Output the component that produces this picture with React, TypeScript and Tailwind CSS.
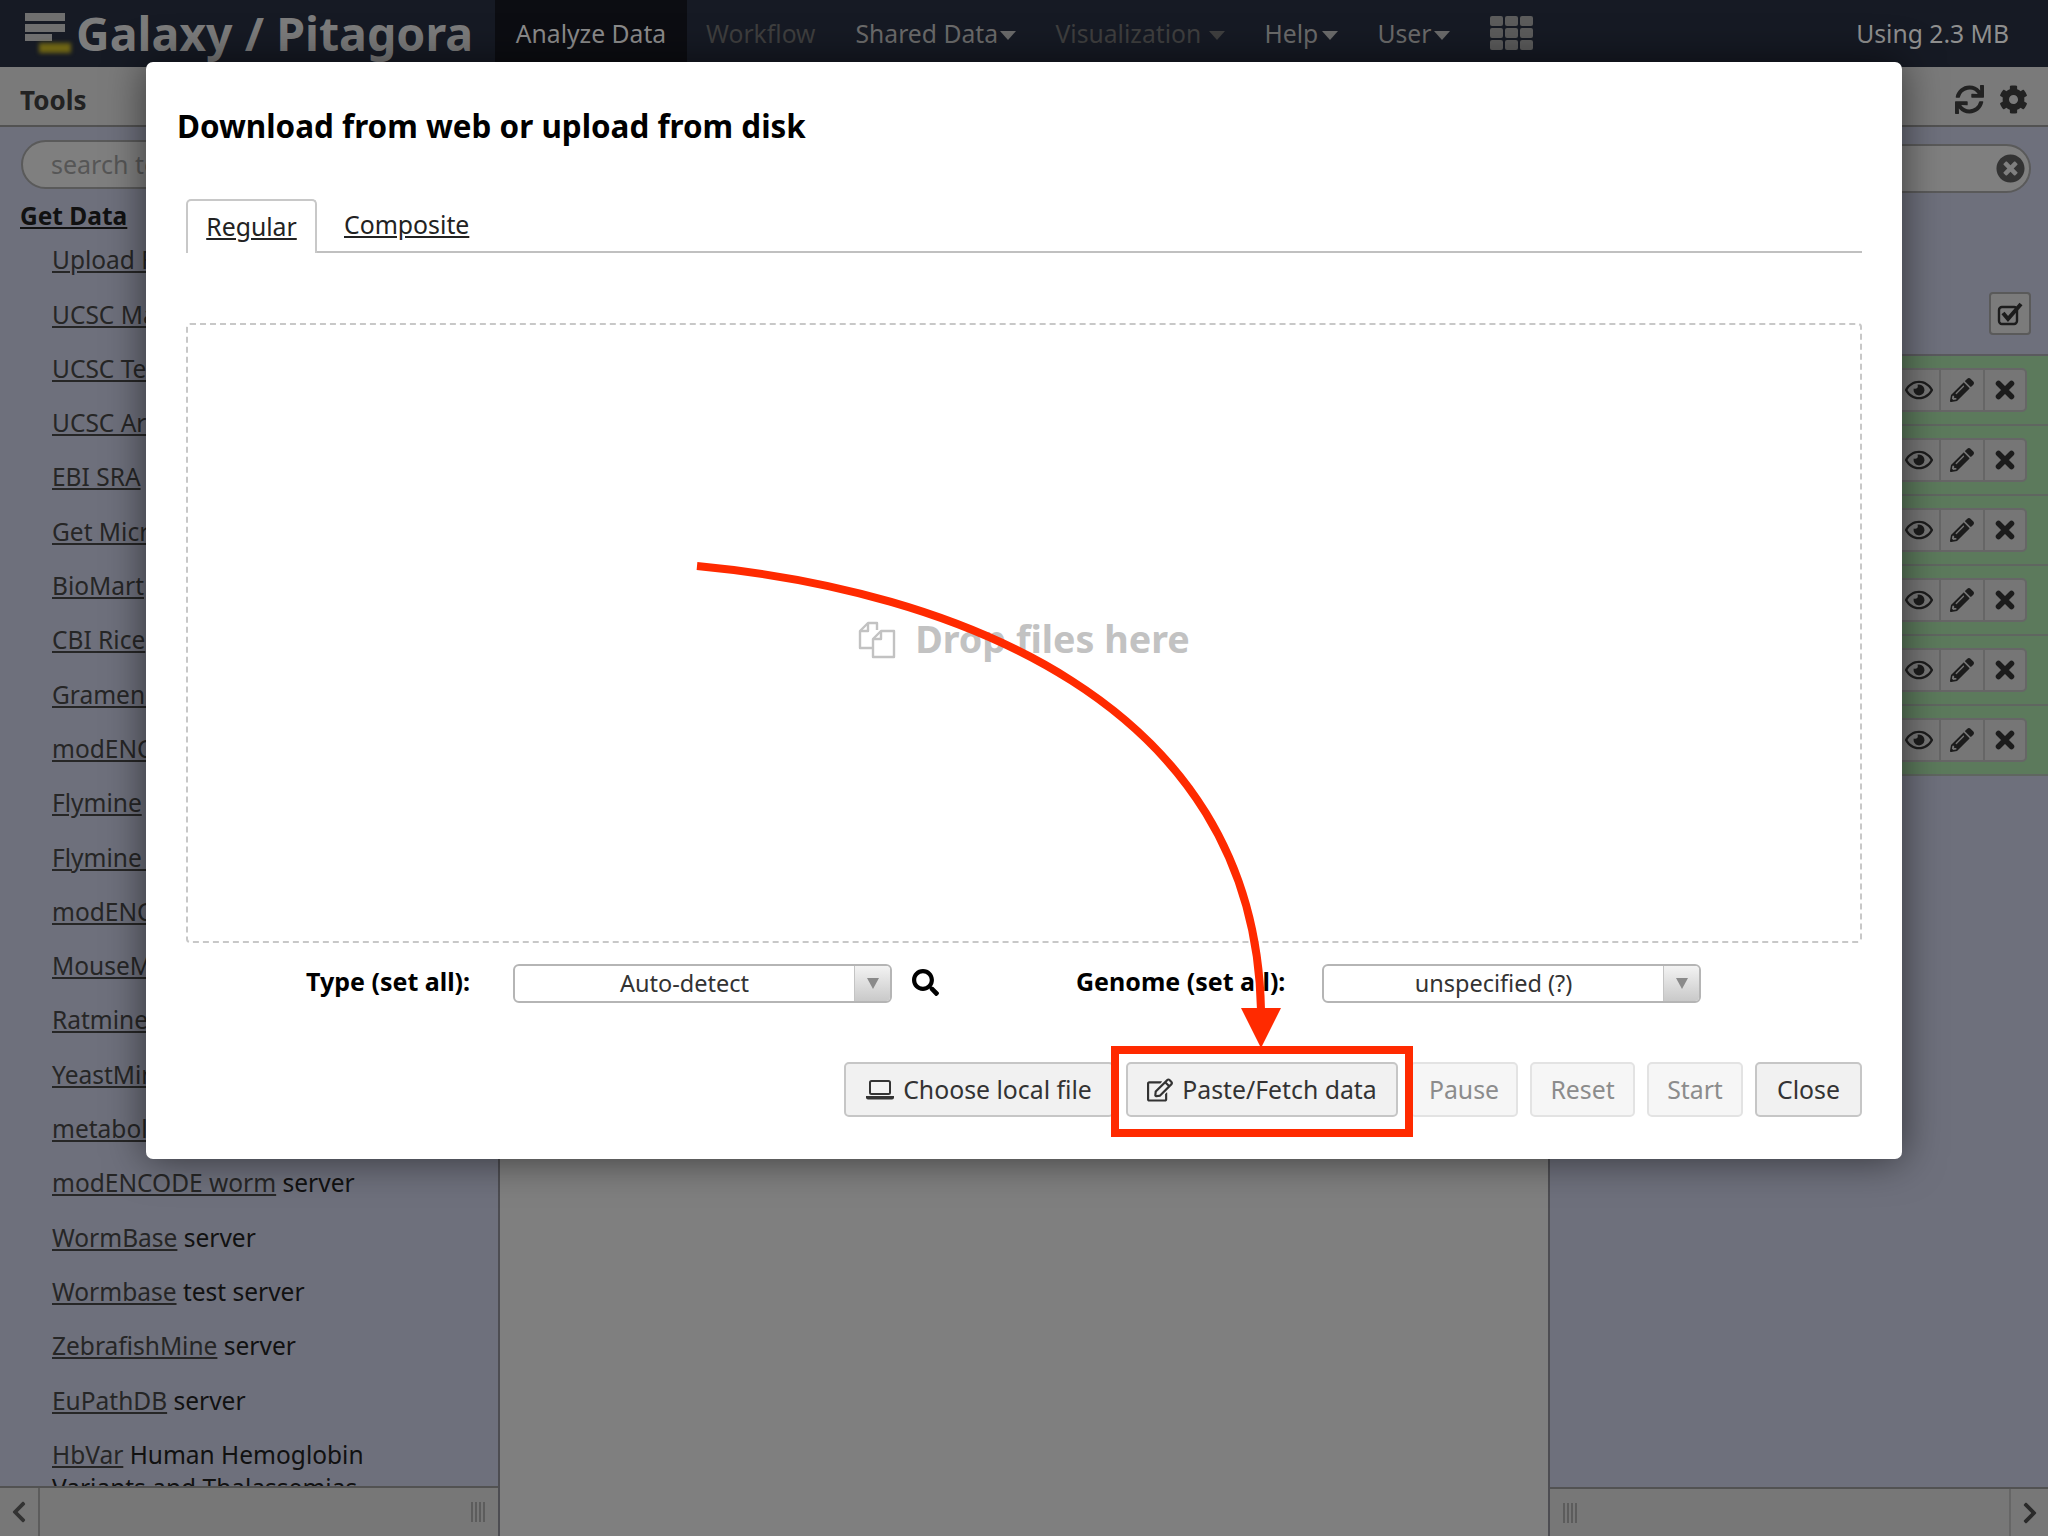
import {
  FaChevronLeft,
  FaChevronRight,
  FaCog,
  FaPencilAlt,
  FaRegEdit,
  FaRegEye,
  FaSearch,
  FaSync,
  FaTimesCircle,
} from "react-icons/fa";

const tools: Array<{ link: string; rest?: string }> = [
  { link: "Upload File", rest: "from your computer" },
  { link: "UCSC Main", rest: "table browser" },
  { link: "UCSC Test", rest: "table browser" },
  { link: "UCSC Archaea", rest: "table browser" },
  { link: "EBI SRA", rest: "ENA SRA" },
  { link: "Get Microbial", rest: "Data" },
  { link: "BioMart", rest: "Ensembl server" },
  { link: "CBI Rice", rest: "Mart" },
  { link: "GrameneMart", rest: "" },
  { link: "modENCODE fly", rest: "server" },
  { link: "Flymine", rest: "server" },
  { link: "Flymine test", rest: "server" },
  { link: "modENCODE modMine", rest: "" },
  { link: "MouseMine", rest: "server" },
  { link: "Ratmine", rest: "server" },
  { link: "YeastMine", rest: "server" },
  { link: "metabolicMine", rest: "server" },
  { link: "modENCODE worm", rest: "server" },
  { link: "WormBase", rest: "server" },
  { link: "Wormbase", rest: "test server" },
  { link: "ZebrafishMine", rest: "server" },
  { link: "EuPathDB", rest: "server" },
];

function NavItem({ label, caret, dim, width }: { label: string; caret?: boolean; dim?: boolean; width?: string }) {
  return (
    <span className={`flex items-center justify-between whitespace-nowrap ${width ?? ""} ${dim ? "text-[#3f3f3f]" : "text-[#6b6b6b]"}`}>
      {label}
      {caret && (
        <span className="mt-[4px] h-0 w-0 shrink-0 border-x-[8px] border-t-[9px] border-x-transparent border-t-current" />
      )}
    </span>
  );
}

function HistoryRow() {
  return (
    <div className="flex h-[70px] items-center justify-end border-b-2 border-[#5f6660] pr-[21px]">
      <div className="flex h-[44px] rounded-[5px] border-2 border-[#666] bg-[#767676] text-[#1c1c1c]">
        <span className="grid w-[42px] place-items-center border-r-2 border-[#666] text-[28px]">
          <FaRegEye />
        </span>
        <span className="grid w-[44px] place-items-center border-r-2 border-[#666] text-[24px]">
          <FaPencilAlt />
        </span>
        <span className="grid w-[40px] place-items-center">
          <svg width="20" height="20" viewBox="0 0 20 20" stroke="#1c1c1c" strokeWidth="5.5" strokeLinecap="round">
            <path d="M3.5 3.5 L16.5 16.5 M16.5 3.5 L3.5 16.5" />
          </svg>
        </span>
      </div>
    </div>
  );
}

function Grip() {
  return (
    <span className="flex h-[20px] gap-[2px]">
      <span className="w-[2px] bg-[#5c5c5c]" />
      <span className="w-[2px] bg-[#5c5c5c]" />
      <span className="w-[2px] bg-[#5c5c5c]" />
      <span className="w-[2px] bg-[#5c5c5c]" />
    </span>
  );
}

function SelectBox({ value, width }: { value: string; width: string }) {
  return (
    <div className={`flex h-[39px] ${width} overflow-hidden rounded-[6px] border-2 border-[#b5b5b5] bg-white`}>
      <span className="flex-1 text-center text-[23.5px] font-normal leading-[35px] text-[#333]">{value}</span>
      <span className="flex w-[36px] items-center justify-center border-l border-[#c4c4c4] bg-gradient-to-b from-[#f3f3f3] to-[#c9c9c9]">
        <span className="h-0 w-0 border-x-[6px] border-t-[11px] border-x-transparent border-t-[#8a8a8a]" />
      </span>
    </div>
  );
}

function FooterButton({ label, width, disabled, children }: { label: string; width: string; disabled?: boolean; children?: React.ReactNode }) {
  return (
    <button
      className={`flex h-[55px] ${width} items-center justify-center gap-[9px] rounded-[5px] border-2 text-[24.8px] ${
        disabled ? "border-[#e3e3e3] bg-[#f6f6f6] text-[#8c8c8c]" : "border-[#c6c6c6] bg-[#f1f1f1] text-[#333]"
      }`}
    >
      {children}
      {label}
    </button>
  );
}

export default function App() {
  return (
    <div className="relative h-[1536px] w-[2048px] overflow-hidden bg-[#7f7f7f] font-['Noto_Sans','DejaVu_Sans',sans-serif]">
      <nav className="flex h-[67px] items-center bg-[#161a24] text-[24.7px]">
        <div className="relative ml-[25px] h-[41px] w-[41px]">
          <span className="absolute left-0 top-0 h-[8px] w-[40px] bg-[#6f6f6f]" />
          <span className="absolute left-0 top-[11px] h-[8px] w-[40px] bg-[#6f6f6f]" />
          <span className="absolute left-0 top-[21px] h-[7px] w-[27px] bg-[#6f6f6f]" />
          <span className="absolute left-[14px] top-[30px] h-[10px] w-[32px] bg-[#6e6414] blur-[2px]" />
        </div>
        <span className="ml-[10px] w-[419px] whitespace-nowrap text-[46.5px] font-bold text-[#7c7c7c]">Galaxy / Pitagora</span>
        <span className="flex h-full w-[192px] items-center justify-center bg-[#0c0d12] text-[#8c8c8c]">Analyze Data</span>
        <div className="ml-[19px] flex items-center gap-[40px]">
          <NavItem label="Workflow" dim />
          <NavItem label="Shared Data" caret width="w-[160px]" />
          <NavItem label="Visualization" caret dim width="w-[169px]" />
          <NavItem label="Help" caret width="w-[73px]" />
          <NavItem label="User" caret width="w-[72px]" />
          <div className="grid grid-cols-3 gap-[2px]">
            {[0, 1, 2, 3, 4, 5, 6, 7, 8].map((i) => (
              <span key={i} className="h-[10px] w-[13px] rounded-[2px] bg-[#5c5c5c]" />
            ))}
          </div>
        </div>
        <span className="ml-auto mr-[39px] text-[#8f8f8f]">Using 2.3 MB</span>
      </nav>

      <div className="flex h-[1469px]">
        <aside className="w-[500px] shrink-0 overflow-hidden border-r-2 border-[#4d4d52] bg-[#6e707c]">
          <div className="flex h-[60px] items-center border-b-2 border-[#525252] bg-[#7a7a7a] pl-[20px] pt-[8px] text-[26px] font-bold text-[#222]">
            Tools
          </div>
          <div className="mx-[21px] mt-[13px] flex h-[49px] items-center rounded-full border-2 border-[#5a5a5a] bg-[#7f7f7f] pl-[28px] text-[25px] text-[#565656]">
            search tools
          </div>
          <div className="h-[1297px] overflow-hidden pl-[20px] text-[24.5px] leading-[54.3px] text-[#111]">
            <a className="font-bold underline">Get Data</a>
            <ul className="-mt-[10px] pl-[32px]">
              {tools.map((t, i) => (
                <li key={i} className="whitespace-nowrap">
                  <a className="text-[#262626] underline">{t.link}</a> {t.rest}
                </li>
              ))}
              <li className="pr-[60px] pt-[10px] leading-[33px]">
                <a className="text-[#262626] underline">HbVar</a> Human Hemoglobin Variants and Thalassemias
              </li>
            </ul>
          </div>
          <div className="flex h-[50px] items-center border-t-2 border-[#525252] bg-[#777]">
            <span className="flex h-full w-[40px] items-center justify-center border-r-2 border-[#5c5c5c] text-[24px] text-[#333]">
              <FaChevronLeft />
            </span>
            <span className="ml-auto mr-[13px]">
              <Grip />
            </span>
          </div>
        </aside>

        <main className="flex-1 bg-[#7f7f7f]" />

        <aside className="w-[500px] shrink-0 border-l-2 border-[#4d4d52] bg-[#6e707c]">
          <div className="flex h-[60px] items-center justify-end gap-[15px] border-b-2 border-[#525252] bg-[#7a7a7a] pr-[20px] pt-[7px] text-[29px] text-[#222]">
            <FaSync />
            <FaCog />
          </div>
          <div className="mx-[17px] mt-[17px] flex h-[49px] items-center justify-end rounded-full border-2 border-[#5a5a5a] bg-[#7f7f7f] pr-[4px] text-[29px] text-[#333]">
            <FaTimesCircle />
          </div>
          <div className="mr-[17px] mt-[99px] flex justify-end">
            <span className="grid h-[43px] w-[42px] place-items-center rounded-[4px] border-2 border-[#5a5a5a] bg-[#7b7b7b]">
              <svg width="26" height="24" viewBox="0 0 26 24" fill="none" stroke="#1c1c1c">
                <rect x="2" y="5" width="18" height="17" rx="3" strokeWidth="2.4" />
                <path d="M6 11 L11 17 L24 2" strokeWidth="4" />
              </svg>
            </span>
          </div>
          <div className="mt-[19px] border-t-2 border-[#5a5a5e] bg-[#5c7a5c]">
            {[0, 1, 2, 3, 4, 5].map((i) => (
              <HistoryRow key={i} />
            ))}
          </div>
          <div className="h-[711px]" />
          <div className="flex h-[50px] items-center border-t-2 border-[#525252] bg-[#777]">
            <span className="ml-[13px]">
              <Grip />
            </span>
            <span className="ml-auto flex h-full w-[39px] items-center justify-center border-l-2 border-[#666] text-[24px] text-[#2a2a2a]">
              <FaChevronRight />
            </span>
          </div>
        </aside>
      </div>

      {/* modal sits over the dimmed page */}
      <div className="absolute left-[146px] top-[62px] h-[1097px] w-[1756px] rounded-[7px] bg-white px-[31px] shadow-[0_0_40px_rgba(0,0,0,0.55)]">
        <h2 className="mt-[44px] h-[40px] whitespace-nowrap text-[31.4px] font-bold leading-[40px] text-black">
          Download from web or upload from disk
        </h2>
        <div className="ml-[9px] mr-[9px] mt-[53px] flex h-[54px] border-b-2 border-[#c0c0c0] text-[24.8px] text-[#222]">
          <a className="mb-[-2px] flex w-[131px] items-center justify-center rounded-t-[5px] border-2 border-b-0 border-[#c8c8c8] bg-white underline">
            Regular
          </a>
          <a className="ml-[27px] flex items-center underline">Composite</a>
        </div>
        <div className="ml-[9px] mr-[9px] mt-[70px] flex h-[620px] items-center justify-center gap-[19px] rounded-[4px] border-2 border-dashed border-[#c8c8c8] pt-[13px] text-[37.7px] font-bold text-[#c2c2c2]">
          <svg width="38" height="38" viewBox="0 0 38 38" fill="none" stroke="#c2c2c2" strokeWidth="2.4" strokeLinejoin="round">
            <path d="M15 27 H2 V10 L10 2 H19 V9" />
            <path d="M10 2 V10 H2" />
            <path d="M15 36 V18 L23 10 H36 V36 Z" fill="#fff" />
            <path d="M23 10 V18 H15" />
          </svg>
          Drop files here
        </div>
        <div className="relative mt-[20px] flex h-[40px] items-center text-[25px] font-bold text-black">
          <span className="ml-[129px] w-[207px] whitespace-nowrap pb-[3px]">Type (set all):</span>
          <SelectBox value="Auto-detect" width="w-[379px]" />
          <FaSearch className="mb-[2px] ml-[20px] text-[27px]" />
          <span className="ml-[137px] w-[246px] whitespace-nowrap pb-[3px]">Genome (set all):</span>
          <SelectBox value="unspecified (?)" width="w-[379px]" />
        </div>
        <div className="mr-[9px] mt-[59px] flex justify-end gap-[12px]">
          <FooterButton label="Choose local file" width="w-[270px]">
            <svg width="28" height="20" viewBox="0 0 28 20" fill="none" stroke="#333">
              <rect x="4" y="1" width="20" height="13" rx="1.5" strokeWidth="2" />
              <path d="M0 16 H28 V17.5 A2 2 0 0 1 26 19.5 H2 A2 2 0 0 1 0 17.5 Z" fill="#333" stroke="none" />
            </svg>
          </FooterButton>
          <FooterButton label="Paste/Fetch data" width="w-[272px]">
            <FaRegEdit className="text-[26px]" />
          </FooterButton>
          <FooterButton label="Pause" width="w-[108px]" disabled />
          <FooterButton label="Reset" width="w-[105px]" disabled />
          <FooterButton label="Start" width="w-[96px]" disabled />
          <FooterButton label="Close" width="w-[107px]" />
        </div>
      </div>

      {/* annotation drawn on top of the screenshot */}
      <div className="absolute left-[1111px] top-[1046px] h-[91px] w-[302px] border-[8px] border-[#ff2a00]" />
      <svg className="absolute left-0 top-0" width="2048" height="1536" fill="none">
        <path d="M697 566 C 950 590, 1255 700, 1261 1010" stroke="#ff2a00" strokeWidth="8" />
        <path d="M1241 1008 L1281 1008 L1261 1048 Z" fill="#ff2a00" />
      </svg>
    </div>
  );
}
